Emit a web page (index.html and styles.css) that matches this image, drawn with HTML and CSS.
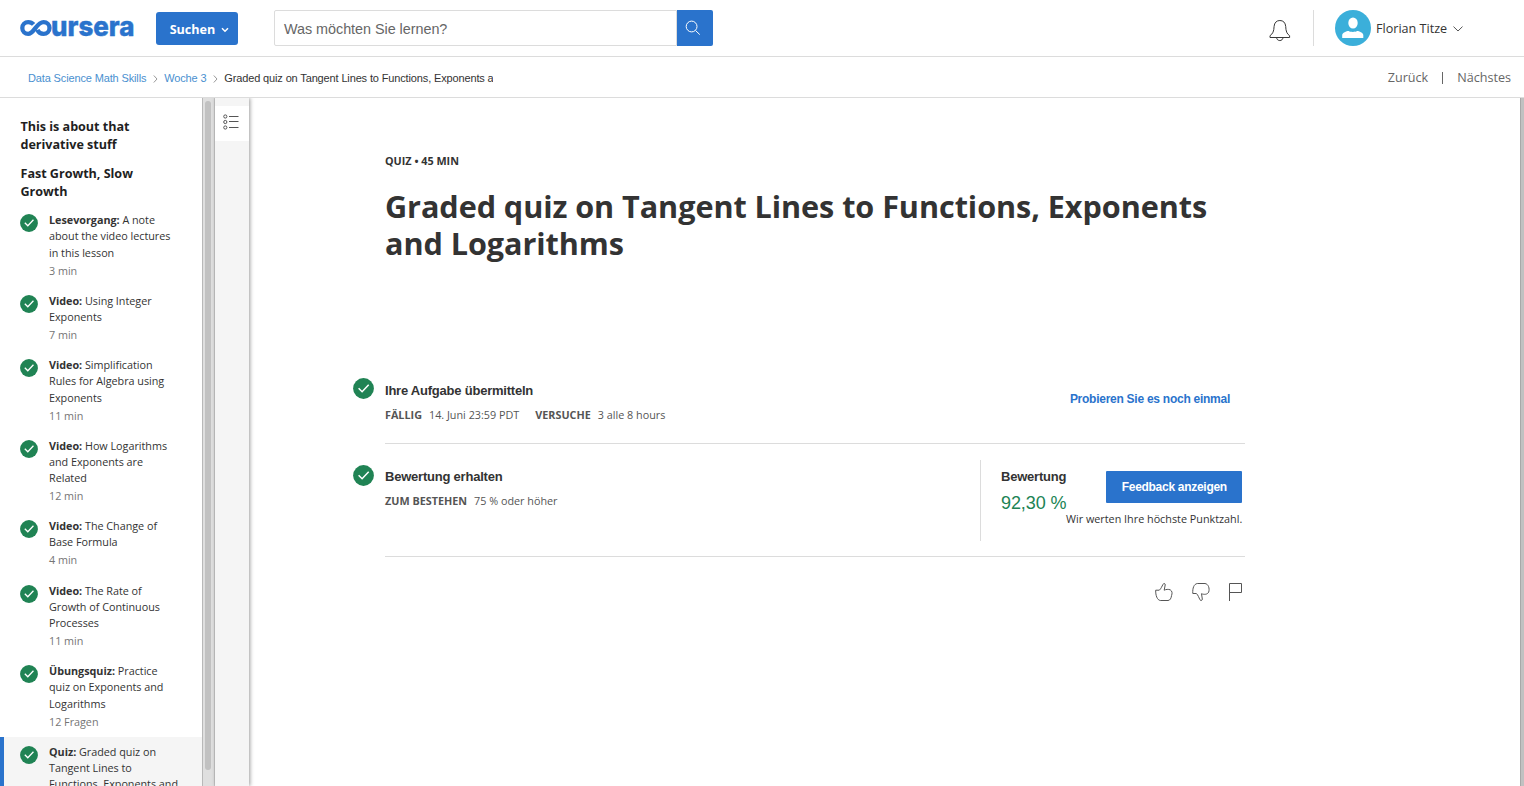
FILE: index.html
```html
<!DOCTYPE html>
<html lang="de">
<head>
<meta charset="utf-8">
<title>Graded quiz | Coursera</title>
<link rel="stylesheet" href="styles.css">
</head>
<body>
<svg class="defs" aria-hidden="true">
  <symbol id="check" viewBox="0 0 21 21"><circle cx="10.5" cy="10.5" r="10.4" fill="#208354"/><path d="M5.6 10.2l3.5 3.5 6.6-7" fill="none" stroke="#fff" stroke-width="1.5"/></symbol>
</svg>
<header class="topbar">
  <svg class="logo" viewBox="0 0 116 24" role="img" aria-label="coursera">
    <path d="M14.6 7.4C13 5.6 11.2 5.1 9.2 5.1A5.9 5.9 0 0 0 9.2 16.9C15.2 16.9 17.4 5.1 24.6 5.1A5.9 5.9 0 1 1 24.6 16.9C21.6 16.9 19.4 15.2 18.4 12.8" fill="none" stroke="#2a73cc" stroke-width="4.3"/>
    <text class="logo-text" x="32" y="18.7" textLength="83.5" lengthAdjust="spacingAndGlyphs">ursera</text>
  </svg>
  <button class="browse">Suchen<svg width="8" height="6" viewBox="0 0 8 6"><path d="M1 1.2l3 3 3-3" fill="none" stroke="#fff" stroke-width="1.5"/></svg></button>
  <div class="search"><span class="search-field">Was möchten Sie lernen?</span><span class="search-button"><svg width="16" height="16" viewBox="0 0 16 16"><circle cx="6.6" cy="6.5" r="5.4"/><path d="M10.5 10.5l4.3 4.1"/></svg></span></div>
  <div class="account">
    <svg class="bell" width="22" height="24" viewBox="0 0 22 24"><path d="M1 18.5V16.7C3.8 14.8 4.9 12.3 5.1 7.4 5.4 3.7 7.5 1.5 10.9 1.5S16.4 3.7 16.7 7.4C16.9 12.3 17.8 14.8 20.6 16.7V18.5ZM7.6 18.5C7.8 22.6 13.8 22.6 14 18.5"/></svg>
    <div class="user">
      <svg width="36" height="36" viewBox="0 0 36 36"><circle cx="18" cy="18" r="18" fill="#3bafda"/><ellipse cx="18" cy="13" rx="4.7" ry="5.6" fill="#fff"/><path d="M7.2 28v-3c0-2.2 4.2-4 6.5-4 1.3 1.2 7 1.2 8.3 0 2.2 0 6.3 1.8 6.3 4v3z" fill="#fff"/></svg>
      <span class="user-name">Florian Titze</span>
      <svg class="chevron" width="10" height="6" viewBox="0 0 10 6"><path d="M.5.6L5 5 9.5.6"/></svg>
    </div>
  </div>
</header>
<nav class="crumbs">
  <a>Data Science Math Skills</a>
  <svg class="sep" width="5" height="8" viewBox="0 0 5 8"><path d="M.8.5L4 4 .8 7.5"/></svg>
  <a>Woche 3</a>
  <svg class="sep" width="5" height="8" viewBox="0 0 5 8"><path d="M.8.5L4 4 .8 7.5"/></svg>
  <span class="current">Graded quiz on Tangent Lines to Functions, Exponents and Logarithms</span>
  <div class="pager"><span>Zurück</span><i></i><span>Nächstes</span></div>
</nav>
<div class="layout">
  <aside class="sidebar">
    <h2>This is about that<br>derivative stuff</h2>
    <h2>Fast Growth, Slow<br>Growth</h2>
    <ul class="lessons">
      <li><svg><use href="#check"/></svg><div><p><b>Lesevorgang:</b> A note<br>about the video lectures<br>in this lesson</p><small>3 min</small></div></li>
      <li><svg><use href="#check"/></svg><div><p><b>Video:</b> Using Integer<br>Exponents</p><small>7 min</small></div></li>
      <li><svg><use href="#check"/></svg><div><p><b>Video:</b> Simplification<br>Rules for Algebra using<br>Exponents</p><small>11 min</small></div></li>
      <li><svg><use href="#check"/></svg><div><p><b>Video:</b> How Logarithms<br>and Exponents are<br>Related</p><small>12 min</small></div></li>
      <li><svg><use href="#check"/></svg><div><p><b>Video:</b> The Change of<br>Base Formula</p><small>4 min</small></div></li>
      <li><svg><use href="#check"/></svg><div><p><b>Video:</b> The Rate of<br>Growth of Continuous<br>Processes</p><small>11 min</small></div></li>
      <li><svg><use href="#check"/></svg><div><p><b>Übungsquiz:</b> Practice<br>quiz on Exponents and<br>Logarithms</p><small>12 Fragen</small></div></li>
      <li class="active"><svg><use href="#check"/></svg><div><p><b>Quiz:</b> Graded quiz on<br>Tangent Lines to<br>Functions, Exponents and<br>Logarithms</p></div></li>
    </ul>
  </aside>
  <div class="scrollbar"><div class="thumb"></div></div>
  <div class="rail"><div class="rail-button"><svg width="16" height="16" viewBox="0 0 16 16"><circle cx="2.3" cy="2.5" r="1.6"/><circle cx="2.3" cy="8" r="1.6"/><circle cx="2.3" cy="13.5" r="1.6"/><path d="M6 2.5h9.5M6 7.5h9.5M6 13.5h9.5"/></svg></div></div>
  <main class="content">
    <div class="kind">QUIZ • 45 MIN</div>
    <h1>Graded quiz on Tangent Lines to Functions, Exponents<br>and Logarithms</h1>
    <section class="row submit">
      <svg class="state"><use href="#check"/></svg>
      <div class="info"><h3>Ihre Aufgabe übermitteln</h3><p><b>FÄLLIG</b><span class="due">14. Juni 23:59 PDT</span><b>VERSUCHE</b><span>3 alle 8 hours</span></p></div>
      <a class="retry">Probieren Sie es noch einmal</a>
    </section>
    <section class="row grade">
      <svg class="state"><use href="#check"/></svg>
      <div class="info"><h3>Bewertung erhalten</h3><p><b>ZUM BESTEHEN</b><span>75 % oder höher</span></p></div>
      <div class="result">
        <div class="score"><h3>Bewertung</h3><strong>92,30 %</strong></div>
        <div class="feedback"><button>Feedback anzeigen</button><span>Wir werten Ihre höchste Punktzahl.</span></div>
      </div>
    </section>
    <div class="actions">
      <svg width="18" height="20" viewBox="0 0 18 20"><path d="M.7 8.2H4.3C6.4 6.3 6.5 4.8 8.1 2.3 8.6 1 10.4 1.2 10.2 3L9.2 8.2C11 7.3 13.3 7.1 15.2 7.8 17.4 9 17.3 11.6 16.6 13.4 16.2 16 15.2 18.5 13 18.5H5.3C2.2 18.1.5 13.4.7 8.2Z"/></svg>
      <svg width="18" height="20" viewBox="0 0 18 20"><path d="M.8 11.5C.4 6 2 2 5.3 1.5H13C16.5 2 17.8 6.5 16.7 10 15.6 12.6 12 12.8 9.5 11.7L10.3 17C10.3 18.8 8.7 19 8 17.8 6.7 15.4 6.2 13.2 4.4 11.5Z"/></svg>
      <svg width="15" height="20" viewBox="0 0 15 20"><path d="M1.5 19V1.5h12v9h-12"/></svg>
    </div>
  </main>
  <div class="edge"></div>
</div>
</body>
</html>
```
FILE: styles.css
```css
* { box-sizing: border-box; }
body { margin: 0; height: 786px; overflow: hidden; display: flex; flex-direction: column; background: #fff; color: #333; font-family: "Open Sans", sans-serif; }
h1, h2, h3, p, ul { margin: 0; padding: 0; }
svg { display: block; flex: none; }
button { border: 0; font: inherit; }
.defs { display: none; }
.topbar { height: 57px; flex: none; border-bottom: 1px solid #dcdcdc; display: flex; padding-left: 19px; }
.logo { width: 116px; height: 24px; margin-top: 17px; overflow: visible; }
.logo-text { font: 800 27.5px Inter, sans-serif; fill: #2a73cc; stroke: #2a73cc; stroke-width: .4; }
.browse { width: 82px; height: 33px; margin: 12px 0 0 21px; padding: 1px 0 0 5px; display: flex; align-items: center; justify-content: center; gap: 6px; background: #2a73cc; color: #fff; border-radius: 3px; font-weight: 700; font-size: 12.6px; }
.browse svg { margin-top: 2px; }
.search { width: 439px; height: 36px; margin: 10px 0 0 36px; display: flex; font: 14.4px "Liberation Sans", sans-serif; letter-spacing: -.04px; }
.search-field { flex: 1; border: 1px solid #dcdcdc; border-radius: 2px 0 0 2px; padding-left: 9px; line-height: 36px; color: #666; }
.search-button { width: 36px; background: #2a73cc; padding: 10px 0 0 8px; border-radius: 0 2px 2px 0; }
.search-button svg { fill: none; stroke: #fff; stroke-width: 1; }
.account { margin-left: auto; display: flex; }
.bell { margin: 19px 22px 0 0; fill: none; stroke: #383838; stroke-width: 1; }
.user { height: 36px; width: 211px; margin-top: 10px; padding-left: 21px; display: flex; align-items: center; border-left: 1px solid #dcdcdc; }
.user-name { margin-left: 5px; font-size: 12.6px; }
.chevron { margin: 2px 0 0 6px; fill: none; stroke: #555; stroke-width: 1; }
.crumbs { height: 41px; flex: none; border-bottom: 1px solid #dcdcdc; display: flex; align-items: center; padding: 2px 13px 0 28px; white-space: nowrap; font: 11px "Liberation Sans", sans-serif; letter-spacing: -.14px; }
.crumbs a { color: #4a90d0; }
.sep { margin: 2px 6px 0 6.9px; fill: none; stroke: #999; }
.current { width: 269px; overflow: hidden; }
.pager { margin: -2px 0 0 auto; display: flex; align-items: center; gap: 14px; font: 12.6px "Open Sans", sans-serif; letter-spacing: 0; color: #666; }
.pager i { width: 1px; height: 12px; margin-top: 2px; background: #666; }
.layout { flex: 1; min-height: 0; display: flex; overflow: hidden; }
.sidebar { width: 202px; padding-top: 20px; overflow: hidden; }
.sidebar h2 { margin: 0 0 11px 20.5px; font-size: 12.6px; line-height: 18px; letter-spacing: -.03px; color: #1f1f1f; }
.lessons { list-style: none; margin-top: -6.7px; }
.lessons li { display: flex; gap: 11px; padding: 7px 0 7.15px 20px; font-size: 10.8px; line-height: 16.13px; letter-spacing: -.02px; white-space: nowrap; }
.lessons svg { width: 18px; height: 18px; margin-top: 2px; }
.lessons small { display: block; margin-top: 1.9px; font-size: 10.8px; color: #757575; }
.lessons .active { background: #f5f5f5; border-left: 4px solid #2a73cc; padding-left: 16px; }
.scrollbar { width: 13px; flex: none; padding: 3px 3px 0 2px; background: #dfdfdf; border-left: 1px solid #b8b8b8; border-right: 1px solid #c8c8c8; }
.thumb { width: 6px; height: 669px; border-radius: 3px; background: #c1c1c1; }
.rail { width: 34px; flex: none; padding-top: 8px; background: #f5f5f5; box-shadow: 1px 0 4px rgba(0,0,0,.4); }
.rail-button { height: 35px; background: #fff; padding: 8px 0 0 8px; }
.rail-button svg { fill: none; stroke: #555; stroke-width: 1; }
.content { flex: 1; padding: 55px 0 0 104px; }
.kind { margin-left: 32px; font-size: 10.8px; line-height: 16px; font-weight: 700; }
h1 { margin: 19px 0 0 32px; font-size: 30.6px; line-height: 37px; letter-spacing: -.06px; white-space: nowrap; }
.row { width: 892px; display: flex; }
.submit { height: 82px; margin-top: 100px; }
.grade { height: 113px; }
.state { width: 21px; height: 21px; margin-right: 11px; }
.submit .state { margin-top: 15.5px; }
.grade .state { margin-top: 21px; }
.info { flex: 1; border-bottom: 1px solid #dcdcdc; font-size: 10.8px; line-height: 16px; color: #555; }
.submit .info { padding-top: 20px; }
.grade .info { padding-top: 24px; }
h3 { font: 700 13px/18px "Liberation Sans", sans-serif; letter-spacing: -.22px; color: #333; }
.info p { margin-top: 7px; }
.info span { margin-left: 7px; }
.info .due { margin-right: 16px; }
.retry { border-bottom: 1px solid #dcdcdc; padding: 29px 15px 0 0; font: 700 12px/16px "Liberation Sans", sans-serif; letter-spacing: -.26px; color: #2a73cc; }
.result { width: 265px; padding-top: 16px; border-bottom: 1px solid #dcdcdc; display: flex; }
.score { width: 86px; height: 81px; flex: none; border-left: 1px solid #dcdcdc; padding: 8px 0 0 20px; white-space: nowrap; }
.score strong { display: block; margin-top: 5px; font: 18px/24px "Liberation Sans", sans-serif; letter-spacing: -.08px; color: #208354; }
.feedback { flex: 1; display: flex; flex-direction: column; align-items: flex-end; padding: 11px 3px 0 0; font-size: 10.8px; line-height: 16px; white-space: nowrap; }
.feedback button { width: 136px; height: 32px; flex: none; padding: 0 0 1px; margin-bottom: 8px; border-radius: 1px; background: #2a73cc; color: #fff; font: 700 12px "Liberation Sans", sans-serif; letter-spacing: -.29px; }
.actions { width: 890px; margin-top: 25px; display: flex; justify-content: flex-end; gap: 19px; }
.actions svg { fill: none; stroke: #555; stroke-width: 1; }
.actions svg:nth-child(2) { margin: 0 -1px 0 0; }
.edge { width: 4px; flex: none; background: #c1c1c1; border-left: 1px solid #a8a8a8; }
```
